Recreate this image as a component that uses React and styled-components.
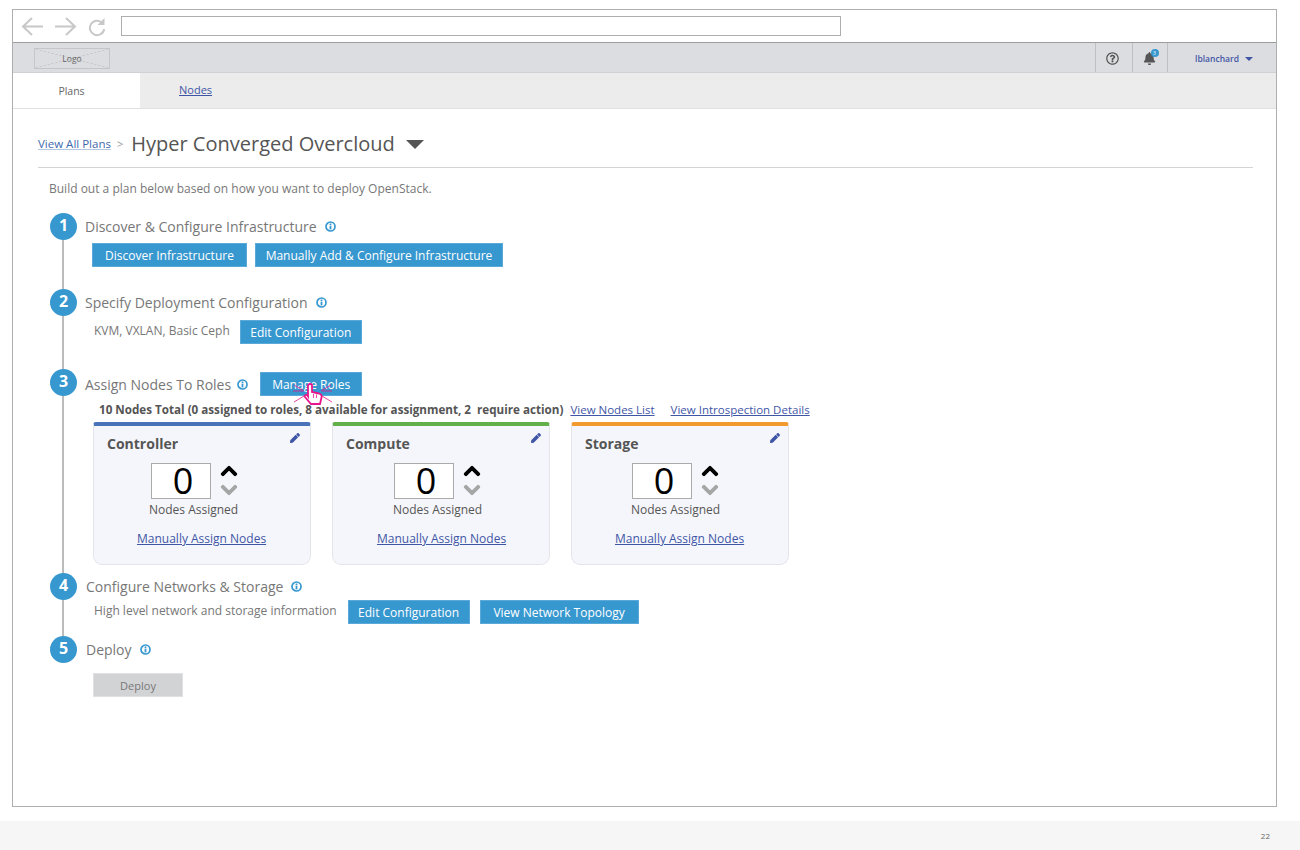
import React from 'react';
import styled, { createGlobalStyle } from 'styled-components';
import { FaBell, FaChevronDown, FaChevronUp, FaPen, FaRegQuestionCircle } from 'react-icons/fa';

const GlobalStyle = createGlobalStyle`
  html, body {
    margin: 0;
    padding: 0;
    background: #fff;
    font-family: "Open Sans", "Liberation Sans", sans-serif;
  }
`;

const Page = styled.div`
  width: 1300px;
  height: 850px;
  overflow: hidden;
  padding-top: 9px;
  box-sizing: border-box;
`;

const Frame = styled.div`
  width: 1265px;
  height: 798px;
  margin-left: 12px;
  box-sizing: border-box;
  border: 1px solid #aeaeae;
  display: flex;
  flex-direction: column;
`;

const BrowserBar = styled.div`
  height: 33px;
  box-sizing: border-box;
  border-bottom: 1px solid #9c9c9c;
  display: flex;
  align-items: center;
  padding-left: 8px;
`;

const NavIcon = styled.svg`
  display: block;
  flex: none;
  margin-right: ${(p) => p.$gap}px;
`;

const UrlField = styled.div`
  width: 720px;
  height: 20px;
  box-sizing: border-box;
  border: 1px solid #aeaeae;
  background: #fff;
`;

const TopBar = styled.div`
  height: 30px;
  box-sizing: border-box;
  background: #dcdde0;
  border-bottom: 1px solid #d0d1d4;
  display: flex;
  align-items: stretch;
  justify-content: space-between;
  padding-left: 21px;
`;

const Logo = styled.div`
  width: 76px;
  height: 21px;
  margin-top: 5px;
  box-sizing: border-box;
  border: 1px solid #c6c6c8;
  display: flex;
  align-items: center;
  justify-content: center;
  font-size: 8.5px;
  color: #666;
  background:
    linear-gradient(to top right, transparent calc(50% - 0.5px), #c6c6c8 50%, transparent calc(50% + 0.5px)),
    linear-gradient(to bottom right, transparent calc(50% - 0.5px), #c6c6c8 50%, transparent calc(50% + 0.5px));
`;

const TopTools = styled.div`
  display: flex;
  align-items: stretch;
`;

const ToolCell = styled.div`
  width: ${(p) => p.$width}px;
  box-sizing: border-box;
  border-left: 1px solid #bfc0c3;
  display: flex;
  align-items: center;
  justify-content: center;
  color: #555;
  gap: 6px;
  padding: 2px ${(p) => p.$padRight ?? 0}px 0 ${(p) => p.$padLeft ?? 0}px;
`;

const BellWrap = styled.span`
  position: relative;
  display: block;
  width: 13px;
  height: 13px;
  color: #555;
  font-size: 13px;
  line-height: 0;
  margin-right: 2px;
`;

const BellBadge = styled.span`
  position: absolute;
  top: -3px;
  right: -3px;
  width: 8px;
  height: 8px;
  border-radius: 50%;
  background: #3797cf;
  color: #fff;
  font-size: 5px;
  line-height: 8px;
  text-align: center;
`;

const UserName = styled.span`
  font-size: 8.5px;
  font-weight: 600;
  color: #3f56a6;
`;

const SmallCaret = styled.span`
  width: 0;
  height: 0;
  border-left: 4px solid transparent;
  border-right: 4px solid transparent;
  border-top: 4px solid #3f56a6;
`;

const TabBar = styled.div`
  height: 36px;
  box-sizing: border-box;
  background: #ececec;
  border-bottom: 1px solid #e0e0e0;
  display: flex;
`;

const PlainTab = styled.div`
  width: 127px;
  height: 35px;
  box-sizing: border-box;
  background: #fff;
  display: flex;
  align-items: center;
  justify-content: center;
  font-size: 10.5px;
  color: #666;
  padding: 0 10px 0 0;
`;

const LinkTab = styled.a`
  margin-left: 39px;
  align-self: center;
  font-size: 11px;
  color: #3f56a6;
  text-decoration: underline;
  padding-bottom: 2px;
`;

const Content = styled.div`
  padding: 0 23px 0 25px;
`;

const Breadcrumb = styled.div`
  height: 59px;
  box-sizing: border-box;
  border-bottom: 1px solid #d4d4d4;
  display: flex;
  align-items: center;
  padding-top: 12px;
`;

const CrumbLink = styled.a`
  font-size: 11.5px;
  color: #3f6aae;
  text-decoration: underline;
  text-decoration-color: #b4c6e0;
  margin-bottom: 2px;
`;

const CrumbSep = styled.span`
  font-size: 11px;
  color: #999;
  margin: 0 8px 2px 6px;
`;

const PlanTitle = styled.h1`
  margin: 0;
  font-size: 20px;
  font-weight: 400;
  color: #555;
  line-height: 26px;
`;

const PlanCaret = styled.span`
  margin-left: 11px;
  width: 0;
  height: 0;
  border-left: 9px solid transparent;
  border-right: 9px solid transparent;
  border-top: 9px solid #555;
`;

const Intro = styled.p`
  margin: 12px 0 15px 11px;
  font-size: 12px;
  line-height: 18px;
  color: #777;
`;

const StepList = styled.div`
  margin-left: 12px;
`;

const Step = styled.div`
  display: flex;
  gap: ${(p) => p.$gap ?? 8}px;
`;

const Marker = styled.div`
  width: 27px;
  flex: none;
  display: flex;
  flex-direction: column;
  align-items: center;
`;

const Circle = styled.div`
  width: 27px;
  height: 27px;
  flex: none;
  border-radius: 50%;
  background: #3797cf;
  color: #fff;
  font-size: 16px;
  font-weight: 700;
  display: flex;
  align-items: center;
  justify-content: center;
  padding-bottom: 3px;
  box-sizing: border-box;
`;

const Connector = styled.div`
  width: 2px;
  flex: 1;
  margin-left: -1px;
  background: #bbb;
`;

const StepBody = styled.div`
  flex: 1;
  padding-bottom: ${(p) => p.$bottom}px;
`;

const TitleRow = styled.div`
  height: ${(p) => p.$height ?? 27}px;
  margin-top: ${(p) => p.$top ?? 0}px;
  display: flex;
  align-items: center;
`;

const StepTitle = styled.h2`
  margin: 0;
  font-size: 14px;
  font-weight: 400;
  color: #777;
`;

const InfoIcon = styled.svg`
  display: block;
  flex: none;
  margin-left: ${(p) => p.$left ?? 8}px;
`;

const ActionRow = styled.div`
  display: flex;
  align-items: center;
  margin-top: ${(p) => p.$top ?? 0}px;
  margin-left: ${(p) => p.$indent}px;
`;

const Button = styled.button`
  height: 24px;
  box-sizing: border-box;
  width: ${(p) => p.$width}px;
  margin-left: ${(p) => p.$left ?? 0}px;
  padding: 0;
  border: 1px solid ${(p) => (p.disabled ? '#e0e0e2' : '#5ba9d8')};
  background: ${(p) => (p.disabled ? '#d2d3d5' : '#3797cf')};
  color: ${(p) => (p.disabled ? '#777' : '#fff')};
  font-family: inherit;
  font-size: ${(p) => (p.disabled ? '11px' : '12px')};
  position: relative;
`;

const StepNote = styled.span`
  font-size: 12px;
  color: #777;
  padding-bottom: 4px;
`;

const Pointer = styled.svg`
  position: absolute;
  left: 32px;
  top: 9px;
  pointer-events: none;
`;

const SummaryRow = styled.div`
  height: 18px;
  margin: 4px 0 4px 14px;
  display: flex;
  align-items: center;
  font-size: 11.65px;
`;

const SummaryText = styled.span`
  font-weight: 700;
  color: #555;
  white-space: pre;
`;

const SummaryLink = styled.a`
  color: #3f56a6;
  text-decoration: underline;
  white-space: nowrap;
  font-size: 11.5px;
  margin-left: ${(p) => p.$left}px;
`;

const CardRow = styled.div`
  display: flex;
  gap: 21px;
  margin-left: 8px;
`;

const Card = styled.div`
  width: 218px;
  height: 143px;
  box-sizing: border-box;
  background: #f5f6fb;
  border: 1px solid #e4e5ea;
  border-top: 4px solid ${(p) => p.$accent};
  border-radius: 3px 3px 9px 9px;
  position: relative;
  padding: 9px 0 0 13px;
`;

const CardTitle = styled.h3`
  margin: 0;
  font-size: 14px;
  line-height: 18px;
  font-weight: 700;
  color: #555;
`;

const EditPen = styled.span`
  position: absolute;
  top: 7px;
  right: ${(p) => p.$right}px;
  color: #3f56a6;
  font-size: 10px;
  line-height: 0;
`;

const Counter = styled.div`
  display: flex;
  margin: 9px 0 0 ${(p) => p.$left}px;
  align-items: center;
`;

const CountBox = styled.div`
  width: 60px;
  height: 36px;
  box-sizing: border-box;
  background: #fff;
  border: 1px solid #aaa;
  display: flex;
  align-items: center;
  justify-content: center;
  font-size: 36px;
  line-height: 34px;
  color: #000;
  padding-left: 4px;
`;

const Arrows = styled.div`
  margin-left: 9px;
  display: flex;
  flex-direction: column;
  align-items: center;
  gap: 1px;
  font-size: 18px;
  line-height: 0;
`;

const ArrowUp = styled(FaChevronUp)`
  color: #000;
  stroke: currentColor;
  stroke-width: 30;
`;

const ArrowDown = styled(FaChevronDown)`
  color: #a6a6a6;
  stroke: currentColor;
  stroke-width: 30;
`;

const AssignedLabel = styled.div`
  margin: 3px 0 0 ${(p) => p.$left}px;
  font-size: 12px;
  line-height: 16px;
  color: #555;
`;

const AssignLink = styled.a`
  display: block;
  margin: 13px 0 0 ${(p) => p.$left}px;
  font-size: 12px;
  line-height: 16px;
  font-weight: 400;
  color: #3f56a6;
  text-decoration: underline;
`;

const Footer = styled.div`
  margin-top: 14px;
  height: 29px;
  background: #f6f6f6;
  display: flex;
  align-items: center;
  justify-content: flex-end;
  padding-right: 30px;
  font-size: 8px;
  color: #666;
`;

const Info = ({ left }) => (
  <InfoIcon $left={left} width="11" height="11" viewBox="0 0 11 11">
    <circle cx="5.5" cy="5.5" r="4.5" fill="none" stroke="#3797cf" strokeWidth="1.7" />
    <rect x="4.6" y="2.5" width="1.8" height="1.5" fill="#3797cf" />
    <rect x="4.6" y="4.6" width="1.8" height="3.8" fill="#3797cf" />
  </InfoIcon>
);

const roles = [
  { name: 'Controller', accent: '#4a72b8', box: 44, label: 42, link: 30, pen: 10 },
  { name: 'Compute', accent: '#63b04a', box: 48, label: 47, link: 31, pen: 8 },
  { name: 'Storage', accent: '#f39a2e', box: 47, label: 46, link: 30, pen: 8 },
];

const RoleCard = ({ name, accent, box, label, link, pen }) => (
  <Card $accent={accent}>
    <CardTitle>{name}</CardTitle>
    <EditPen $right={pen}><FaPen /></EditPen>
    <Counter $left={box}>
      <CountBox>0</CountBox>
      <Arrows>
        <ArrowUp />
        <ArrowDown />
      </Arrows>
    </Counter>
    <AssignedLabel $left={label}>Nodes Assigned</AssignedLabel>
    <AssignLink $left={link}>Manually Assign Nodes</AssignLink>
  </Card>
);

const App = () => {
  return (
    <Page>
      <GlobalStyle />
      <Frame>
        <BrowserBar>
          <NavIcon $gap={10} width="23" height="21" viewBox="0 0 23 21" fill="none" stroke="#c8c8c8" strokeWidth="2">
            <path d="M22 10.5H2M11 2l-9 8.5 9 8.5" />
          </NavIcon>
          <NavIcon $gap={10} width="23" height="21" viewBox="0 0 23 21" fill="none" stroke="#c8c8c8" strokeWidth="2">
            <path d="M1 10.5h20M12 2l9 8.5-9 8.5" />
          </NavIcon>
          <NavIcon $gap={14} width="20" height="21" viewBox="0 0 20 21" fill="none">
            <path d="M15.5 7.2a7.2 7.2 0 1 0 1.7 5.8" stroke="#c8c8c8" strokeWidth="2" />
            <path d="M17.5 2v7h-7z" fill="#c8c8c8" />
          </NavIcon>
          <UrlField />
        </BrowserBar>
        <TopBar>
          <Logo>Logo</Logo>
          <TopTools>
            <ToolCell $width={37} $padRight={3}><FaRegQuestionCircle size={13} /></ToolCell>
            <ToolCell $width={35}>
              <BellWrap>
                <FaBell />
                <BellBadge>3</BellBadge>
              </BellWrap>
            </ToolCell>
            <ToolCell $width={109} $padLeft={4}>
              <UserName>lblanchard</UserName>
              <SmallCaret />
            </ToolCell>
          </TopTools>
        </TopBar>
        <TabBar>
          <PlainTab>Plans</PlainTab>
          <LinkTab>Nodes</LinkTab>
        </TabBar>
        <Content>
          <Breadcrumb>
            <CrumbLink>View All Plans</CrumbLink>
            <CrumbSep>&gt;</CrumbSep>
            <PlanTitle>Hyper Converged Overcloud</PlanTitle>
            <PlanCaret />
          </Breadcrumb>
          <Intro>Build out a plan below based on how you want to deploy OpenStack.</Intro>
          <StepList>
            <Step>
              <Marker>
                <Circle>1</Circle>
                <Connector />
              </Marker>
              <StepBody $bottom={22}>
                <TitleRow>
                  <StepTitle>Discover &amp; Configure Infrastructure</StepTitle>
                  <Info />
                </TitleRow>
                <ActionRow $top={3} $indent={7}>
                  <Button $width={155}>Discover Infrastructure</Button>
                  <Button $width={248} $left={8}>Manually Add &amp; Configure Infrastructure</Button>
                </ActionRow>
              </StepBody>
            </Step>
            <Step>
              <Marker>
                <Circle>2</Circle>
                <Connector />
              </Marker>
              <StepBody $bottom={25}>
                <TitleRow>
                  <StepTitle>Specify Deployment Configuration</StepTitle>
                  <Info />
                </TitleRow>
                <ActionRow $top={4} $indent={9}>
                  <StepNote>KVM, VXLAN, Basic Ceph</StepNote>
                  <Button $width={122} $left={10}>Edit Configuration</Button>
                </ActionRow>
              </StepBody>
            </Step>
            <Step>
              <Marker>
                <Circle>3</Circle>
                <Connector />
              </Marker>
              <StepBody $bottom={8}>
                <TitleRow $top={3} $height={24}>
                  <StepTitle>Assign Nodes To Roles</StepTitle>
                  <Info left={6} />
                  <Button $width={102} $left={12}>
                    Manage Roles
                    <Pointer width="40" height="26" viewBox="0 0 40 26" fill="none">
                      <path d="M1 3l10 6M0 9h10M1 20l10-6M38 3l-10 6M39 9H29M39 20l-10-6" stroke="#e6178c" strokeWidth="0.8" />
                      <path d="M15 3.5c0-2 4-2 4 0V10l7 1.5c2 .5 3 2 2.6 3.5L27 22H18l-6-7c-1-1.5 1-3 2.5-1.5l.5.8z" fill="#fff" stroke="#e6178c" strokeWidth="1.8" />
                      <path d="M20.5 12v4M23.5 12.5v3.5" stroke="#e6178c" strokeWidth="0.8" />
                    </Pointer>
                  </Button>
                </TitleRow>
                <SummaryRow>
                  <SummaryText>10 Nodes Total (0 assigned to roles, 8 available for assignment, 2  require action)</SummaryText>
                  <SummaryLink $left={7}>View Nodes List</SummaryLink>
                  <SummaryLink $left={16}>View Introspection Details</SummaryLink>
                </SummaryRow>
                <CardRow>
                  {roles.map((role) => (
                    <RoleCard key={role.name} {...role} />
                  ))}
                </CardRow>
              </StepBody>
            </Step>
            <Step $gap={9}>
              <Marker>
                <Circle>4</Circle>
                <Connector />
              </Marker>
              <StepBody $bottom={12}>
                <TitleRow>
                  <StepTitle>Configure Networks &amp; Storage</StepTitle>
                  <Info />
                </TitleRow>
                <ActionRow $indent={8}>
                  <StepNote>High level network and storage information</StepNote>
                  <Button $width={122} $left={11}>Edit Configuration</Button>
                  <Button $width={159} $left={10}>View Network Topology</Button>
                </ActionRow>
              </StepBody>
            </Step>
            <Step $gap={9}>
              <Marker>
                <Circle>5</Circle>
              </Marker>
              <StepBody $bottom={0}>
                <TitleRow>
                  <StepTitle>Deploy</StepTitle>
                  <Info />
                </TitleRow>
                <ActionRow $top={10} $indent={7}>
                  <Button disabled $width={90}>Deploy</Button>
                </ActionRow>
              </StepBody>
            </Step>
          </StepList>
        </Content>
      </Frame>
      <Footer>22</Footer>
    </Page>
  );
};

export default App;
